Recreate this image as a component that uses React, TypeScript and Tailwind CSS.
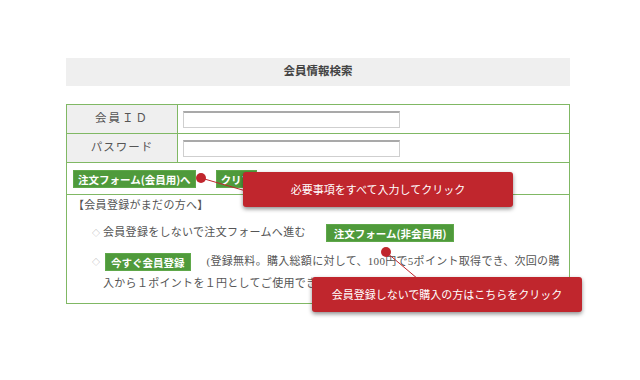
import React from "react";

const serif = { fontFamily: '"Liberation Serif", "Noto Sans CJK JP", serif' };
const sans = { fontFamily: '"Noto Sans CJK JP", "Noto Sans", sans-serif' };

function GreenBtn({ children, className = "" }: { children: React.ReactNode; className?: string }) {
  return (
    <span
      style={sans}
      className={`inline-block align-middle bg-[#4f9a3b] text-white font-bold text-[10.5px] tracking-normal leading-[17px] h-[18px] border border-[#5fa84a] ${className}`}
    >
      {children}
    </span>
  );
}

function Bullet() {
  return (
    <span className="inline-block w-[11px] ml-[-11px] text-[#aaa] text-[8px] align-middle leading-[21px] tracking-normal">◇</span>
  );
}

export default function App() {
  return (
    <div className="relative w-[640px] h-[380px] bg-white overflow-hidden" style={serif}>
      <div className="ml-[66px] w-[504px] pt-[58px] text-[#555] text-[11px]">
        <div className="h-[28px] bg-[#efefef] flex items-center justify-center font-bold text-[#444] text-[11.5px]">
          会員情報検索
        </div>

        <table className="mt-[18px] w-full border-collapse border border-[#80b864]">
          <tbody>
            <tr className="h-[29px]">
              <th className="w-[111px] bg-[#efefef] border border-[#80b864] font-normal text-center text-[11.5px] text-[#555] tracking-[2px]">
                会員ＩＤ
              </th>
              <td className="border border-[#80b864] pl-[5px]">
                <div className="w-[217px] h-[17px] border border-[#cfcfcf] border-t-[#a9a9a9] border-t-2 bg-white" />
              </td>
            </tr>
            <tr className="h-[29px]">
              <th className="bg-[#efefef] border border-[#80b864] font-normal text-center text-[11.5px] text-[#555] tracking-[1px]">
                パスワード
              </th>
              <td className="border border-[#80b864] pl-[5px]">
                <div className="w-[217px] h-[17px] border border-[#cfcfcf] border-t-[#a9a9a9] border-t-2 bg-white" />
              </td>
            </tr>
            <tr className="h-[32px]">
              <td colSpan={2} className="border border-[#80b864] px-[6px]">
                <div className="flex items-center gap-[20px]">
                  <GreenBtn className="px-[4px]">注文フォーム(会員用)へ</GreenBtn>
                  <GreenBtn className="px-[4px]">クリア</GreenBtn>
                </div>
              </td>
            </tr>
            <tr className="h-[109px]">
              <td colSpan={2} className="border border-[#80b864] px-[6px] pt-0 pb-[9px] align-top leading-[21px] text-[11px] tracking-[0.3px]">
                <div>【会員登録がまだの方へ】</div>
                <ul className="pl-[30px] mt-[6px] list-none">
                  <li>
                    <Bullet />
                    会員登録をしないで注文フォームへ進む
                    <GreenBtn className="ml-[20px] px-[7px]">注文フォーム(非会員用)</GreenBtn>
                  </li>
                  <li className="mt-[7px]">
                    <Bullet />
                    <GreenBtn className="ml-[2px] mr-[16px] px-[5px]">今すぐ会員登録</GreenBtn>
                    (登録無料。購入総額に対して、100円で5ポイント取得でき、次回の購入から１ポイントを１円としてご使用できます。)
                  </li>
                </ul>
              </td>
            </tr>
          </tbody>
        </table>
      </div>

      <svg className="absolute inset-0 pointer-events-none" width="640" height="380">
        <line x1="201" y1="178" x2="246" y2="191" stroke="#c0262d" strokeWidth="1" />
        <circle cx="201" cy="178" r="5" fill="#c0262d" />
        <line x1="386" y1="252" x2="418" y2="279" stroke="#c0262d" strokeWidth="1" />
        <circle cx="386" cy="252" r="5" fill="#c0262d" />
      </svg>

      <div
        style={sans}
        className="absolute left-[243px] top-[172px] w-[270px] h-[35px] rounded-[3px] bg-[#c0262d] text-white text-[11px] flex items-center justify-center shadow-[0_2px_4px_rgba(0,0,0,0.45)]"
      >
        必要事項をすべて入力してクリック
      </div>
      <div
        style={sans}
        className="absolute left-[312px] top-[277px] w-[270px] h-[35px] rounded-[3px] bg-[#c0262d] text-white text-[11px] flex items-center justify-center shadow-[0_2px_4px_rgba(0,0,0,0.45)]"
      >
        会員登録しないで購入の方はこちらをクリック
      </div>
    </div>
  );
}
